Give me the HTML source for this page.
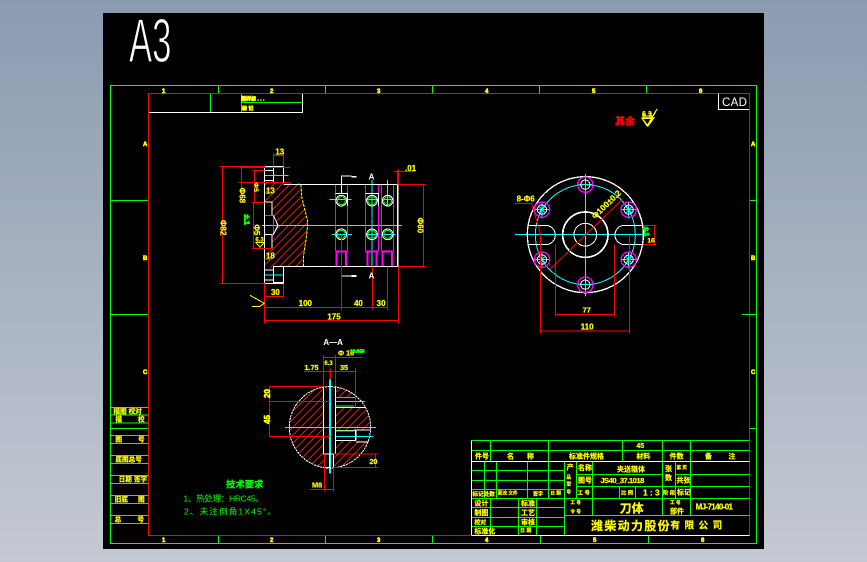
<!DOCTYPE html>
<html><head><meta charset="utf-8"><title>A3</title>
<style>
html,body{margin:0;padding:0;width:867px;height:562px;overflow:hidden;background:linear-gradient(#8a9bb0,#c5c9d3)}
svg{position:absolute;left:0;top:0;display:block}
text{font-family:"Liberation Sans","Noto Sans CJK SC",sans-serif}
.y text,text.y{fill:#ff0}
.y text{font-weight:bold;stroke:#ff0;stroke-width:.6}
</style></head><body>
<svg width="867" height="562" viewBox="0 0 867 562" shape-rendering="crispEdges" fill="none">
<defs>
<clipPath id="c1"><path d="M163 128H270L275 170L292 240L293 256L288 300L280 350V379H190L163 392V326H186V284H190L204 256L190 226H186V186H163Z"/></clipPath>
<clipPath id="c2"><path d="M161 171A122 122 0 0 0 161 412V372H161V171ZM196 171V202H256V232H196V302H256V332H196V372H190V412A122 122 0 0 0 299 332H258V300H299A122 122 0 0 0 285 232H258V202H262A122 122 0 0 0 196 171Z"/></clipPath>
</defs>
<rect x="103" y="13" width="661" height="536" fill="#000"/>
<text transform="translate(129,62) scale(.56,1)" font-size="62" fill="#fff" stroke="#000" stroke-width="1.2" shape-rendering="auto">A3</text>

<!-- frames -->
<rect x="110.5" y="85.5" width="646" height="458" stroke="#0f0"/>
<rect x="148.5" y="93.5" width="601" height="442" stroke="#f00"/>
<path stroke="#0f0" d="M218.5 86V93M325.5 86V93M432.5 86V93M539.5 86V93M646.5 86V93M218.5 536V543M325.5 536V543M432.5 536V543M540.5 536V543M648.5 536V543M111 200.5H148M111 314.5H148M111 428.5H148M750 200.5H756M742 314.5H756M750 428.5H756"/>
<g class="y" font-size="6">
<text x="162" y="93">1</text><text x="270" y="93">2</text><text x="377" y="93">3</text><text x="485" y="93">4</text><text x="592" y="93">5</text><text x="699" y="93">6</text>
<text x="162" y="542">1</text><text x="270" y="542">2</text><text x="377" y="542">3</text><text x="485" y="542">4</text><text x="593" y="542">5</text><text x="701" y="542">6</text>
<text x="143" y="146">A</text><text x="143" y="260">B</text><text x="143" y="374">C</text><text x="751" y="146">A</text><text x="751" y="260">B</text><text x="751" y="374">C</text>
</g>

<!-- CAD tag -->
<path stroke="#fff" d="M718.5 93.5V109.5H749"/>
<text x="722" y="106" font-size="11.5" fill="#fff" letter-spacing=".3">CAD</text>

<!-- top-left stamp -->
<path stroke="#fff" d="M149 112.5H302.5V94"/>
<path stroke="#0f0" d="M210.5 94V112M241.5 94V112M241 102.5H302"/>
<g class="y" font-size="5"><text x="241" y="100.500">图样标 .  .  .</text><text x="242" y="110">标 记</text></g>

<!-- top-right roughness -->
<text x="615" y="125" font-size="10" font-weight="bold" fill="#f00" stroke="#f00" stroke-width=".4">其余</text>
<g stroke="#ff0"><path d="M642 118H654L648 126ZM648 126L657 109"/></g>
<text class="y" x="642" y="116" font-size="7" font-weight="bold">6.3</text>

<!-- MAIN VIEW -->
<g transform="translate(210,140) scale(.33333)" stroke-width="3">
<path clip-path="url(#c1)" stroke="#f00" d="M300 0L0 300M324 0L0 324M348 0L0 348M372 0L0 372M396 0L0 396M420 0L0 420M444 0L0 444M468 0L0 468M492 0L0 492M516 0L0 516M540 0L0 540M564 0L0 564M588 0L0 588M612 0L0 612M636 0L0 636M660 0L0 660M684 0L0 684"/>
<path stroke="#ff0" stroke-dasharray="9 3" d="M273 133L275 170L292 240L293 256L288 300L280 350V379"/>
<path stroke="#0ff" d="M156 256H576M163 106H235M163 405H220M486 120V235M533 120V200M486 237V379M358 178H424M366 283H426M468 178H504M468 283H504M512 283H556M516 178H552"/>
<path stroke="#f0f" d="M376 133V333M412 133V333M466 133V333M506 133V333M514 133V333M550 133V333"/>
<path stroke="#f0f" stroke-width="6" d="M376 335H412M466 335H506M514 335H550M380 338V379M408 338V379M472 338V379M500 338V379M518 338V379M546 338V379"/>
<path stroke="#f0f" d="M163 226H190V284H163"/>
<g stroke="#fff">
<path d="M220 133H563M220 379H563M163 80H220V128H190V80M163 92H190M163 122H190M163 80V430M163 186H186V226M163 284H186V326H163M190 226L204 256L190 284M163 390H190M163 420H190M163 430H220V380H190V430"/>
<path d="M394 160V108H424M396 408H424M376 160H412V198M466 160H506V198"/>
<path stroke-width="5" d="M190 80H220M190 429H220M424 110H440M424 408H440"/>
<path stroke-width="5" d="M563 133V379"/>
<circle cx="394" cy="182" r="16"/><circle cx="394" cy="283" r="16"/><circle cx="486" cy="182" r="16"/><circle cx="486" cy="283" r="16"/><circle cx="533" cy="182" r="16"/><circle cx="533" cy="283" r="16"/>
</g>
<g stroke="#0f0"><circle cx="394" cy="182" r="12"/><circle cx="394" cy="283" r="12"/><circle cx="486" cy="182" r="12"/><circle cx="486" cy="283" r="12"/><circle cx="533" cy="182" r="12"/><circle cx="533" cy="283" r="12"/></g>
<path stroke="#f00" d="M190 40V80M220 40V80M190 46H220M28 80H165M28 430H165M37 80V430M88 82H240M95 82V165M128 92H163M134 92V188M85 127H240M124 187H163M131 187V326M126 326H190M163 358H186M552 94H612M565 133H648M565 379H648M640 133V379M565 379V550M163 430V550M163 470H220M220 430V475M163 502H532M163 541H565M394 283V510M487 379V510M532 379V510"/>
<path stroke="#f00" stroke-width="6" d="M564 88V133"/>
<g class="y" font-size="24">
<text x="196" y="43">13</text>
<text x="168" y="160">13</text>
<text x="168" y="355">18</text>
<text x="183" y="465">30</text>
<text x="266" y="498">100</text>
<text x="432" y="498">40</text>
<text x="500" y="498">30</text>
<text x="352" y="539">175</text>
<text x="585" y="93">.01</text>
<text transform="translate(32,240) rotate(90)">Φ82</text>
<text transform="translate(88,143) rotate(90)">Φ68</text>
<text transform="translate(132,128) rotate(90)" font-size="20">Φ5</text>
<text transform="translate(132,253) rotate(90)">Φ5</text>
<text transform="translate(622,233) rotate(90)">Φ60</text>
<path stroke="#ff0" d="M120 466L163 490L148 500H126"/>
<path stroke="#ff0" d="M138 308H162L150 322Z"/>
<text x="136" y="304" font-size="18">6.3</text>
</g>
<text transform="translate(103,224) rotate(90)" font-size="22" font-weight="bold" fill="#0f0" stroke="#0f0">±.1</text>
<text x="476" y="118" font-size="24" font-weight="bold" fill="#fff">A</text>
<text x="476" y="416" font-size="24" font-weight="bold" fill="#fff">A</text>
</g>

<!-- RIGHT VIEW -->
<g transform="translate(500,100) scale(.33333)" stroke-width="3">
<path stroke="#0ff" d="M45 404H440M256 222V590M126 305V355M102 329H150M386 305V355M362 329H410M126 455V505M102 479H150M386 455V505M362 479H410M232 254H280M232 554H280"/>
<circle cx="256" cy="404" r="150" stroke="#0ff"/>
<path stroke="#fff" d="M106 376H137A29 29 0 0 1 137 434H82M82 376H106M430 376H374A29 29 0 0 0 374 434H430"/>
<circle cx="256" cy="404" r="174" stroke="#fff" stroke-width="4"/>
<circle cx="256" cy="404" r="68" stroke="#fff" stroke-width="5"/>
<circle cx="256" cy="404" r="34" stroke="#fff"/>
<g stroke="#f0f" stroke-width="4"><circle cx="256" cy="254" r="23"/><circle cx="256" cy="554" r="23"/><circle cx="126" cy="329" r="23"/><circle cx="386" cy="329" r="23"/><circle cx="126" cy="479" r="23"/><circle cx="386" cy="479" r="23"/></g>
<g stroke="#fff"><circle cx="256" cy="254" r="14"/><circle cx="256" cy="554" r="14"/><circle cx="126" cy="329" r="14"/><circle cx="386" cy="329" r="14"/><circle cx="126" cy="479" r="14"/><circle cx="386" cy="479" r="14"/></g>
<path stroke="#0ff" d="M116 319L136 339M136 319L116 339M376 319L396 339M396 319L376 339M116 469L136 489M136 469L116 489M376 469L396 489M396 469L376 489"/>
<path stroke="#f00" d="M150 508L365 300M45 310H95L122 404M121 404V700M388 404V700M166 434V650M343 434V650M166 643H343M121 693H388M430 376H470M430 434H470M464 376V434"/>
<g class="y" font-size="24">
<text x="50" y="305">8-Φ6</text>
<text x="248" y="637" font-size="22">77</text>
<text x="242" y="689">110</text>
<text x="442" y="428" font-size="20">16</text>
<text transform="translate(285,358) rotate(-44)" font-size="25">Φ100±0.2</text>
<text x="426" y="52" font-size="22">6.3</text>
<path stroke="#ff0" d="M426 55H458L441 78ZM441 78L470 28"/>
</g>
<text transform="translate(434,381) rotate(90)" font-size="20" font-weight="bold" fill="#0f0" stroke="#0f0">±.1</text>
</g>

<!-- SECTION -->
<g transform="translate(270,330) scale(.33333)" stroke-width="3">
<path clip-path="url(#c2)" stroke="#f00" d="M240 0L0 240M264 0L0 264M288 0L0 288M312 0L0 312M336 0L0 336M360 0L0 360M384 0L0 384M408 0L0 408M432 0L0 432M456 0L0 456M480 0L0 480M504 0L0 504M528 0L0 528M552 0L0 552M576 0L0 576M600 0L0 600M624 0L0 624M648 0L0 648M672 0L0 672M696 0L0 696"/>
<path stroke="#0ff" d="M45 292H318M196 214H285M196 320H310"/>
<path stroke="#0ff" stroke-width="7" d="M180 148V430"/>
<path stroke="#f00" stroke-width="5" d="M181 115V148"/>
<circle cx="180" cy="292" r="122" stroke="#fff" stroke-dasharray="7 2"/>
<path stroke="#fff" d="M161 171V372H196V171M196 202H256V232H196M258 232H285M196 302H256V332H196M258 332V300H300M258 336H295M178 372V412M190 372V412M163 412H178"/>
<path stroke="#0f0" d="M196 203H256M196 228H252M196 303H252M163 375V412"/>
<path stroke="#f00" d="M160 75V170M196 75V170M160 82H278M102 124H256M256 114V232M-1 169H160M-1 214H180M-1 319H180M-1 170V319M190 372H324M190 412H324M316 372V412M163 372V485M190 412V485M120 478H190"/>
<g class="y" font-size="22">
<text x="103" y="120">1.75</text><text x="210" y="120">35</text><text x="298" y="402">20</text><text x="126" y="473">M8</text><text x="204" y="76">Φ 16</text><text x="163" y="105" font-size="18">6.3</text>
</g>
<text x="240" y="68" font-size="14" font-weight="bold" fill="#0f0" stroke="#0f0">+0.043</text>
<text x="160" y="45" font-size="24" font-weight="bold" fill="#fff">A—A</text>
</g>
<g class="y" font-size="8"><text transform="translate(270,398) rotate(-90)">20</text><text transform="translate(270,424) rotate(-90)">45</text></g>

<!-- left table -->
<g transform="translate(100,400) scale(.33333)" stroke-width="3">
<path stroke="#0f0" d="M33 22H145M33 45H145M33 69H145M33 106H145M33 130H145M33 166H145M33 190H145M33 226H145M33 250H145M33 286H145M33 310H145M33 346H145M33 370H145"/>
<g class="y" font-size="20"><text x="40" y="40">描图 校对</text><text x="46" y="64">描</text><text x="114" y="64">校</text><text x="46" y="125">图</text><text x="114" y="125">号</text><text x="46" y="185">底图总号</text><text x="56" y="245">日期 签字</text><text x="44" y="305">旧底</text><text x="114" y="305">图</text><text x="44" y="365">总</text><text x="112" y="365">号</text></g>
<text x="378" y="262" font-size="28" font-weight="bold" fill="#0f0" stroke="#0f0" stroke-width=".6" textLength="112">技术要求</text>
<g fill="#0f0" font-size="26">
<text x="250" y="304" textLength="242">1、热处理：HRC45。</text>
<text x="252" y="344" textLength="276">2、未注倒角1X45°。</text>
</g>
</g>

<!-- TITLE BLOCK -->
<g transform="translate(465,435) scale(.33333)" stroke-width="3">
<path stroke="#0f0" d="M19 16H853M19 46H853M76 16V79M250 16V79M472 16V79M592 16V79M676 16V79M19 106H298M19 136H298M19 163H298M19 190H853M19 217H298M19 247H298M19 274H298M58 79V190M94 79V190M187 79V190M250 79V190M76 190V301M160 190V301M214 190V301M298 79V301M334 79V190M382 79V241M463 154V190M511 154V190M592 79V241M631 79V190M676 79V241M334 118H592M631 118H853M334 154H853M298 241H853"/>
<path stroke="#fff" d="M19 16V301H853M19 79H853"/>
<path stroke="#f00" d="M853 0V16M-1 301H19"/>
<g class="y" font-size="21">
<text x="514" y="39">45</text>
<text x="30" y="71">件号</text><text x="126" y="71">名</text><text x="186" y="71">称</text><text x="312" y="71">标准件规格</text><text x="514" y="71">材料</text><text x="614" y="71">件数</text><text x="720" y="71">备</text><text x="790" y="71">注</text>
<text x="305" y="104">产</text><text x="304" y="130" font-size="14">品</text><text x="304" y="152" font-size="14">型</text><text x="304" y="176" font-size="14">号</text>
<text x="339" y="105">名称</text><text x="456" y="109" font-size="21" textLength="84">夹送辊体</text><text x="339" y="143">图号</text>
<text x="406" y="144" font-size="23" textLength="132">JS40_37.1018</text>
<text x="338" y="178" font-size="16">工 号</text><text x="468" y="178" font-size="16">比 例</text><text x="534" y="182" font-size="25">1 : 3</text>
<text x="600" y="108">张</text><text x="600" y="135">数</text><text x="634" y="102" font-size="14">第 页</text><text x="634" y="143">共张</text><text x="594" y="178" font-size="16">阶 段</text><text x="636" y="178">标记</text>
<text x="22" y="183" font-size="17">标记处数</text><text x="98" y="178" font-size="14">更改 文件</text><text x="204" y="182" font-size="15">签字</text><text x="256" y="178" font-size="14">日 期</text>
<text x="28" y="212">设计</text><text x="28" y="240">制图</text><text x="28" y="268" font-size="18">校对</text><text x="28" y="295">标准化</text>
<text x="168" y="212">标准</text><text x="168" y="240">工艺</text><text x="168" y="268">审核</text><text x="165" y="291" font-size="15">日 期</text>
<text x="316" y="207" font-size="14">工 号</text><text x="316" y="234" font-size="14">令 号</text>
<text x="464" y="232" font-size="36" font-weight="bold">刀体</text>
<text x="615" y="207" font-size="14">工 号</text><text x="615" y="235">部件</text>
<text x="692" y="223" font-size="24" textLength="112">MJ-7140-01</text>
<text x="378" y="285" font-size="36" textLength="236">潍柴动力股份</text>
<text x="616" y="281" font-size="29" font-weight="normal" stroke-width="0" textLength="156">有限公司</text>
</g>
</g>
</svg>
</body></html>
